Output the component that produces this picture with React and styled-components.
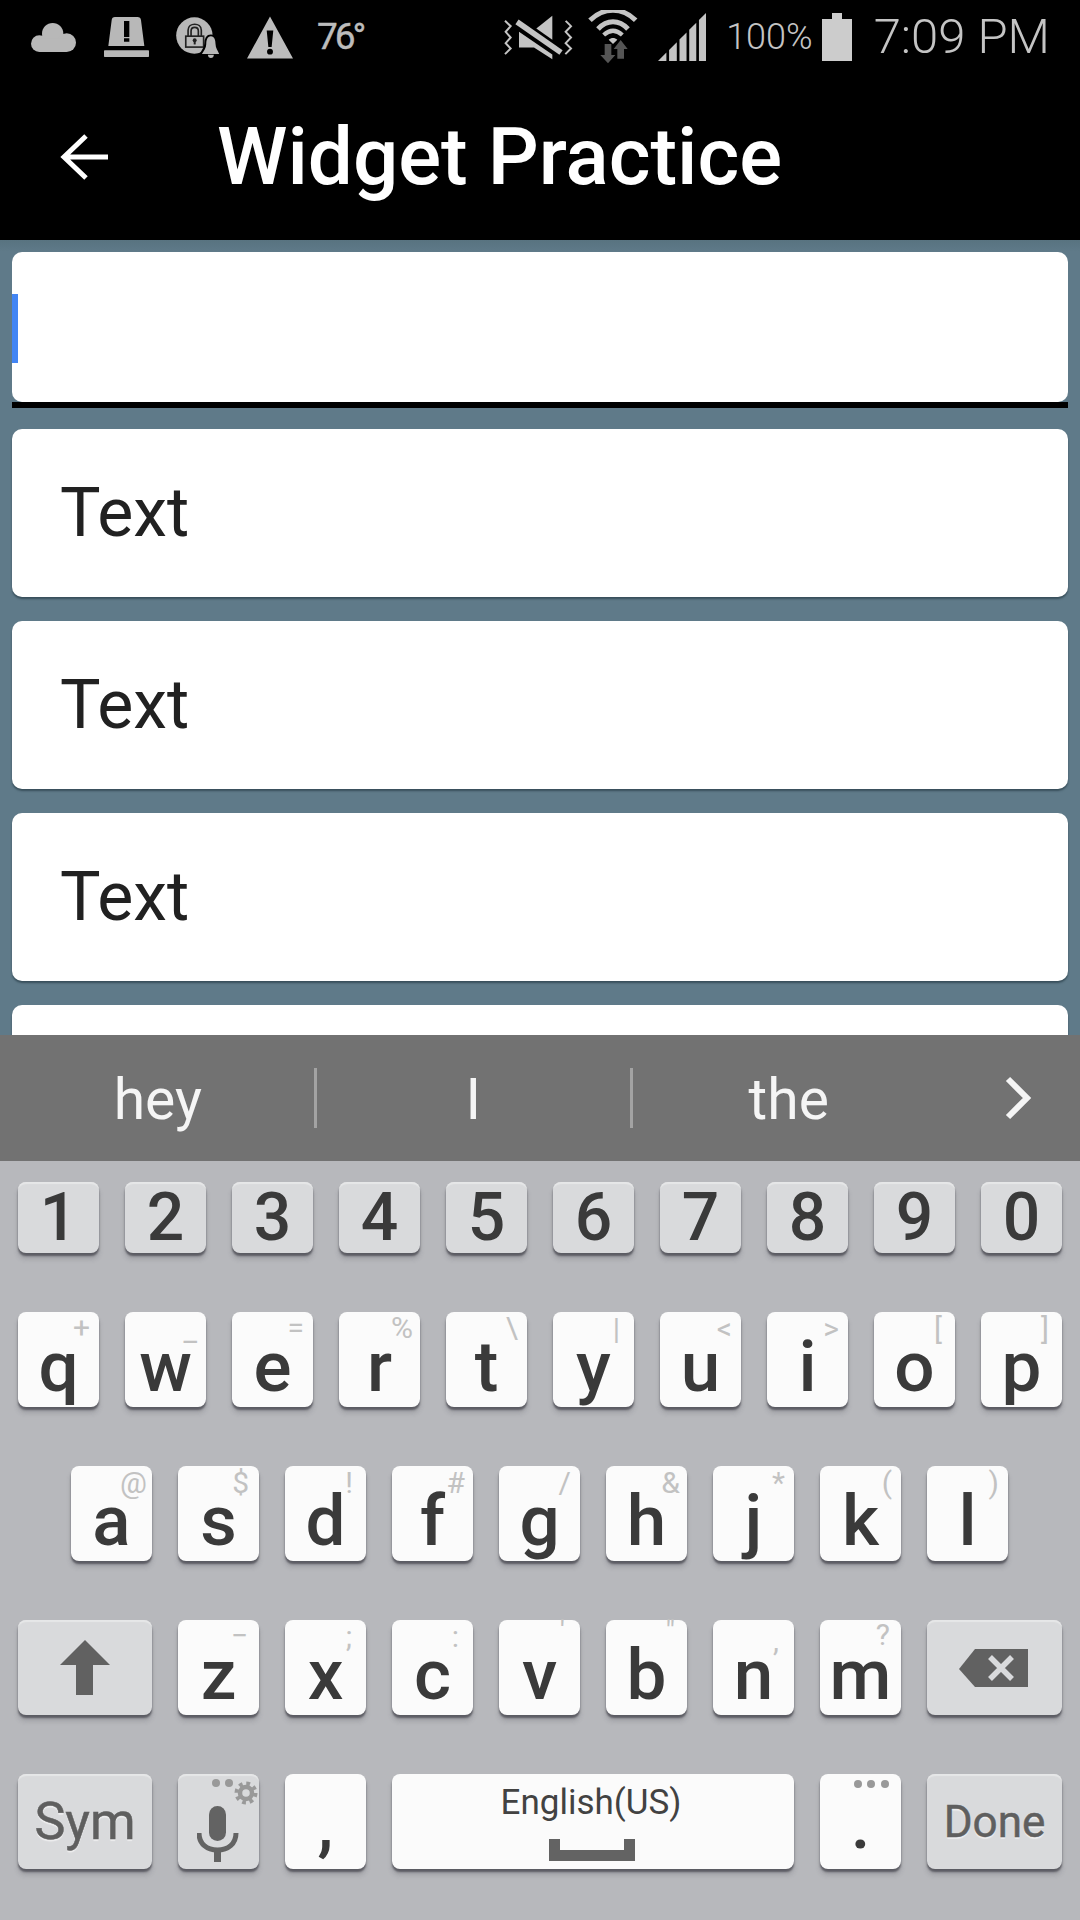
import styled, { createGlobalStyle } from 'styled-components'

const Global = createGlobalStyle`
html, body { margin: 0; padding: 0; background: #000; }
body { width: 1080px; height: 1920px; overflow: hidden; font-family: Roboto, "Liberation Sans", sans-serif; }
`

const Screen = styled.div`
width: 1080px;
height: 1920px;
display: flex;
flex-direction: column;
overflow: hidden;
`

const StatusBar = styled.div`
height: 74px;
flex: none;
display: flex;
align-items: center;
justify-content: space-between;
padding: 0 30px 0 31px;
background: #000;
`
const StatusGroup = styled.div`
display: flex;
align-items: center;
`
const Icon = styled.svg`
display: block;
flex: none;
margin-left: ${p => p.$ml || 0}px;
`
const Temp = styled.span`
margin-left: 24px;
width: 46px;
font-size: 37px;
line-height: 40px;
color: #bcbcbc;
white-space: nowrap;
letter-spacing: -3px;
-webkit-text-stroke: 0.4px #bcbcbc;
`
const Battery = styled.span`
margin-left: 20px;
font-size: 36px;
font-weight: 300;
line-height: 40px;
color: #c4c4c4;
`
const Clock = styled.span`
margin-left: 22px;
font-size: 49px;
font-weight: 300;
line-height: 56px;
color: #c4c4c4;
white-space: nowrap;
`

const AppBar = styled.header`
height: 166px;
flex: none;
display: flex;
align-items: center;
padding-left: 60px;
background: #000;
`
const Title = styled.h1`
margin: 0 0 0 109px;
font-size: 80px;
font-weight: 500;
line-height: 92px;
color: #fff;
white-space: nowrap;
`

const Content = styled.main`
height: 795px;
flex: none;
overflow: hidden;
display: flex;
flex-direction: column;
gap: 24px;
padding: 12px 12px 0;
box-sizing: border-box;
background: linear-gradient(#587380 0, #5f7a89 12px);
`
const Field = styled.div`
flex: none;
margin-bottom: -3px;
`
const FieldBox = styled.div`
height: 150px;
box-sizing: border-box;
padding-top: 42px;
border-radius: 10px;
background: #fff;
`
const Underline = styled.div`
height: 6px;
background: #000;
`
const Cursor = styled.div`
width: 6px;
height: 69px;
background: #4285f4;
`
const Card = styled.div`
flex: none;
height: 168px;
display: flex;
align-items: center;
padding-left: 48px;
border-radius: 10px;
background: #fff;
box-shadow: 0 2px 2px rgba(30, 50, 60, 0.6);
font-size: 68px;
color: #212121;
`

const Suggestions = styled.div`
height: 126px;
flex: none;
display: flex;
align-items: center;
background: #727272;
`
const Suggestion = styled.div`
width: 315.5px;
padding-top: 3px;
text-align: center;
font-size: 57px;
line-height: 60px;
color: #f5f5f5;
`
const Divider = styled.div`
width: 3px;
height: 60px;
margin: 0 -1.5px;
background: #a3a3a3;
`
const MoreButton = styled.div`
flex: 1;
display: flex;
justify-content: flex-end;
padding-right: 48px;
`

const Keyboard = styled.div`
flex: 1;
display: flex;
flex-direction: column;
gap: 59px;
padding: 21px 18px 0;
background: #b7b8bc;
`
const KeyRow = styled.div`
display: flex;
gap: 26px;
padding-left: ${p => p.$indent || 0}px;
`
const Key = styled.div`
position: relative;
flex: none;
box-sizing: border-box;
width: ${p => p.$w || 81}px;
height: ${p => p.$h || 95}px;
display: flex;
align-items: ${p => (p.$center ? 'center' : 'flex-end')};
justify-content: center;
border-radius: 8px;
background: ${p => (p.$dark ? '#d9dadc' : '#fbfbfb')};
box-shadow: ${p => (p.$dark ? 'inset 0 3px 1px -1px #e6e7e8,' : '')} 0 3px 2px rgba(70, 70, 78, 0.75), 0 6px 5px rgba(70, 70, 78, 0.22);
color: #3a3a3a;
font-weight: 500;
font-size: 71px;
line-height: 1;
`
const Letter = styled.span`
display: block;
height: 71px;
margin-bottom: ${p => p.$lift ?? 5}px;
`
const Digit = styled.span`
font-size: 66px;
line-height: 71px;
`
const Hint = styled.span`
position: absolute;
top: ${p => p.$t ?? 0}px;
right: ${p => p.$r ?? 10}px;
font-size: 30px;
font-weight: 400;
line-height: 32px;
color: #c2c2c2;
`
const ActionText = styled.span`
font-size: ${p => p.$s}px;
font-weight: 400;
line-height: 60px;
color: #5f5f5f;
-webkit-text-stroke: 0.5px #5f5f5f;
text-shadow: 0 2px 1px #eeeeef;
`
const SpaceLabel = styled.div`
position: absolute;
top: 9px;
left: 0;
right: 4px;
text-align: center;
font-size: 35px;
font-weight: 400;
line-height: 40px;
color: #424242;
`
const KeyIcon = styled.svg`
position: absolute;
left: ${p => p.$x}px;
top: ${p => p.$y}px;
display: block;
`

const topRow = [
  ['q', '+', 9, 0], ['w', '_', 9, 3], ['e', '=', 9, 0], ['r', '%', 7, 0], ['t', '\\', 9, 0],
  ['y', '|', 14, 1], ['u', '<', 9, 1], ['i', '>', 9, 1], ['o', '[', 13, 1], ['p', ']', 13, 1],
]
const homeRow = [
  ['a', '@', 5, 1], ['s', '$', 10, 1], ['d', '!', 13, 1], ['f', '#', 8, 1], ['g', '/', 9, 1],
  ['h', '&', 7, 1], ['j', '*', 9, 1], ['k', '(', 9, 1], ['l', ')', 9, 1],
]
const bottomRow = [
  ['z', '−', 11, 0], ['x', ';', 14, 1], ['c', ':', 14, 1], ['v', "'", 15, -5],
  ['b', '"', 12, -5], ['n', ',', 15, 5], ['m', '?', 11, -1],
]
const digits = ['1', '2', '3', '4', '5', '6', '7', '8', '9', '0']

function LetterKey({ item }) {
  const [letter, hint, r, t] = item
  return (
    <Key>
      <Hint $r={r} $t={t}>{hint}</Hint>
      <Letter>{letter}</Letter>
    </Key>
  )
}

export default function App() {
  return (
    <Screen>
      <Global />
      <StatusBar>
        <StatusGroup>
          {/* status icons use the crop's 3x units as viewBox */}
          <Icon width="45" height="29" viewBox="33 43 135 87" fill="#b8b8b8">
            <circle cx="58" cy="105" r="25" />
            <circle cx="98" cy="75" r="32" />
            <circle cx="140" cy="102" r="28" />
            <rect x="58" y="90" width="82" height="40" />
          </Icon>
          <Icon $ml={28} width="45" height="40" viewBox="252 28 135 120" fill="#b8b8b8">
            <path fillRule="evenodd" d="M285 28H352Q362 28 363 38L373 115H265L275 38Q276 28 285 28ZM312 40V88H328V40ZM312 92V102H328V92Z" />
            <rect x="252" y="128" width="135" height="20" rx="2" />
          </Icon>
          <Icon $ml={27} width="44" height="41" viewBox="20 28 132 124">
            <circle cx="75" cy="84" r="55" fill="#b8b8b8" />
            <path d="M56 86V68C56 44 96 44 96 68V86" fill="none" stroke="#222" strokeWidth="5" />
            <path d="M65 86V70C65 56 87 56 87 70V86" fill="none" stroke="#222" strokeWidth="5" />
            <rect x="49" y="86" width="54" height="33" fill="#b8b8b8" stroke="#222" strokeWidth="5" />
            <circle cx="76" cy="98" r="6" fill="#222" />
            <rect x="73" y="98" width="6" height="13" fill="#222" />
            <path d="M125 84C112 84 108 98 108 110C108 124 100 130 92 142H152C148 130 142 124 142 110C142 98 138 84 125 84Z" fill="#000" stroke="#000" strokeWidth="6" />
            <path d="M125 86C114 86 111 98 111 110C111 122 104 130 98 140H150C146 130 139 122 139 110C139 98 136 86 125 86Z" fill="#b8b8b8" />
            <path d="M116 142H134C134 148 130 152 125 152C120 152 116 148 116 142Z" fill="#b8b8b8" />
          </Icon>
          <Icon $ml={27} width="46" height="43" viewBox="230 25 140 128" fill="#bcbcbc">
            <path fillRule="evenodd" d="M300 25L370 153H230ZM290 68L295 118H305L310 68ZM300 123A9 9 0 1 0 300 141A9 9 0 1 0 300 123Z" />
          </Icon>
          <Temp>76°</Temp>
        </StatusGroup>
        <StatusGroup>
          <Icon width="69" height="47" viewBox="15 25 207 140">
            <path d="M18 45L35 61L20 78L35 95L20 112L35 128L18 145" fill="none" stroke="#c4c4c4" strokeWidth="6" />
            <path d="M200 45L216 61L200 78L216 95L200 112L216 128L199 145" fill="none" stroke="#c4c4c4" strokeWidth="6" />
            <path d="M112 68L160 30V102Z" fill="#c4c4c4" />
            <path d="M60 78L160 146V160L105 125H60Z" fill="#c4c4c4" />
            <path d="M54 48L186 140" fill="none" stroke="#c4c4c4" strokeWidth="17" />
          </Icon>
          <Icon $ml={15} width="50" height="54" viewBox="268 15 150 162">
            <path d="M274 46C315 6 371 6 411 46" fill="none" stroke="#c4c4c4" strokeWidth="15" />
            <path d="M298 72C325 43 361 43 388 72" fill="none" stroke="#c4c4c4" strokeWidth="15" />
            <path d="M315 90C333 74 353 74 371 90" fill="none" stroke="#c4c4c4" strokeWidth="13" />
            <path d="M330 104C338 97 348 97 356 104L343 117Z" fill="#c4c4c4" />
            <path d="M318 117H338V150H350L328 175L305 150H318Z" fill="#555" />
            <path d="M366 105L387 132H376V161H356V132H345Z" fill="#555" />
          </Icon>
          <Icon $ml={20} width="48" height="48" viewBox="487 25 143 143" fill="#c4c4c4">
            <path d="M487 168L512 143V168ZM520 168V135L543 112V168ZM551 168V104L572 83V168ZM580 168V75L601 54V168ZM609 168V46L630 25V168Z" />
          </Icon>
          <Battery>100%</Battery>
          <Icon $ml={9} width="30" height="48" viewBox="0 0 30 48" fill="#cccccc">
            <path d="M10 0H20V6H30V48H0V6H10Z" />
          </Icon>
          <Clock>7:09 PM</Clock>
        </StatusGroup>
      </StatusBar>

      <AppBar>
        <Icon width="48" height="46" viewBox="0 0 48 46" fill="none" stroke="#fff" strokeWidth="5">
          <path d="M48 23H4M26 2L4 23L26 44" />
        </Icon>
        <Title>Widget Practice</Title>
      </AppBar>

      <Content>
        <Field>
          <FieldBox><Cursor /></FieldBox>
          <Underline />
        </Field>
        <Card>Text</Card>
        <Card>Text</Card>
        <Card>Text</Card>
        <Card />
      </Content>

      <Suggestions>
        <Suggestion>hey</Suggestion>
        <Divider />
        <Suggestion>I</Suggestion>
        <Divider />
        <Suggestion>the</Suggestion>
        <MoreButton>
          <Icon width="28" height="44" viewBox="0 0 28 44" fill="none" stroke="#f5f5f5" strokeWidth="6">
            <path d="M4 3L23 22L4 41" />
          </Icon>
        </MoreButton>
      </Suggestions>

      <Keyboard>
        <KeyRow>
          {digits.map(d => (
            <Key key={d} $dark $center $h={71}><Digit>{d}</Digit></Key>
          ))}
        </KeyRow>
        <KeyRow>
          {topRow.map(item => <LetterKey key={item[0]} item={item} />)}
        </KeyRow>
        <KeyRow $indent={53}>
          {homeRow.map(item => <LetterKey key={item[0]} item={item} />)}
        </KeyRow>
        <KeyRow>
          <Key $dark $w={134}>
            <KeyIcon $x={42} $y={20} width="50" height="55" viewBox="0 0 50 55" fill="#616161">
              <path d="M25 0L50 25H33V55H16V25H0Z" />
            </KeyIcon>
          </Key>
          {bottomRow.map(item => <LetterKey key={item[0]} item={item} />)}
          <Key $dark $w={135}>
            <KeyIcon $x={32} $y={29} width="69" height="38" viewBox="0 0 69 38">
              <path d="M16 0H69V38H16L0 20Z" fill="#616161" />
              <path d="M31 8L53 30M53 8L31 30" fill="none" stroke="#d9dadc" strokeWidth="5.500" />
            </KeyIcon>
          </Key>
        </KeyRow>
        <KeyRow>
          <Key $dark $center $w={134}><ActionText $s={52}>Sym</ActionText></Key>
          <Key $dark>
            <KeyIcon $x={19} $y={4} width="62" height="86" viewBox="0 0 62 86">
              <circle cx="19" cy="5" r="4" fill="#999" />
              <circle cx="32" cy="5" r="4" fill="#999" />
              <circle cx="49" cy="15" r="6" fill="none" stroke="#999" strokeWidth="4.500" />
              <circle cx="49" cy="15" r="9.500" fill="none" stroke="#999" strokeWidth="4" strokeDasharray="3.730 3.730" />
              <rect x="12" y="28" width="17" height="35" rx="8.500" fill="#636363" />
              <path d="M2 55C2 66 10 72 20.500 72C31 72 39 66 39 55" fill="none" stroke="#636363" strokeWidth="5" />
              <rect x="17" y="71" width="7" height="13" fill="#636363" />
            </KeyIcon>
          </Key>
          <Key><Letter $lift={10}>,</Letter></Key>
          <Key $w={402}>
            <SpaceLabel>English(US)</SpaceLabel>
            <KeyIcon $x={157} $y={65} width="86" height="22" viewBox="0 0 86 22" fill="#636363">
              <path d="M0 0H11V11H75V0H86V22H0Z" />
            </KeyIcon>
          </Key>
          <Key>
            <KeyIcon $x={34} $y={5} width="40" height="10" viewBox="0 0 40 10" fill="#999">
              <circle cx="4" cy="5" r="4" />
              <circle cx="17" cy="5" r="4" />
              <circle cx="31" cy="5" r="4" />
            </KeyIcon>
            <Letter $lift={10}>.</Letter>
          </Key>
          <Key $dark $center $w={135}><ActionText $s={44}>Done</ActionText></Key>
        </KeyRow>
      </Keyboard>
    </Screen>
  )
}
